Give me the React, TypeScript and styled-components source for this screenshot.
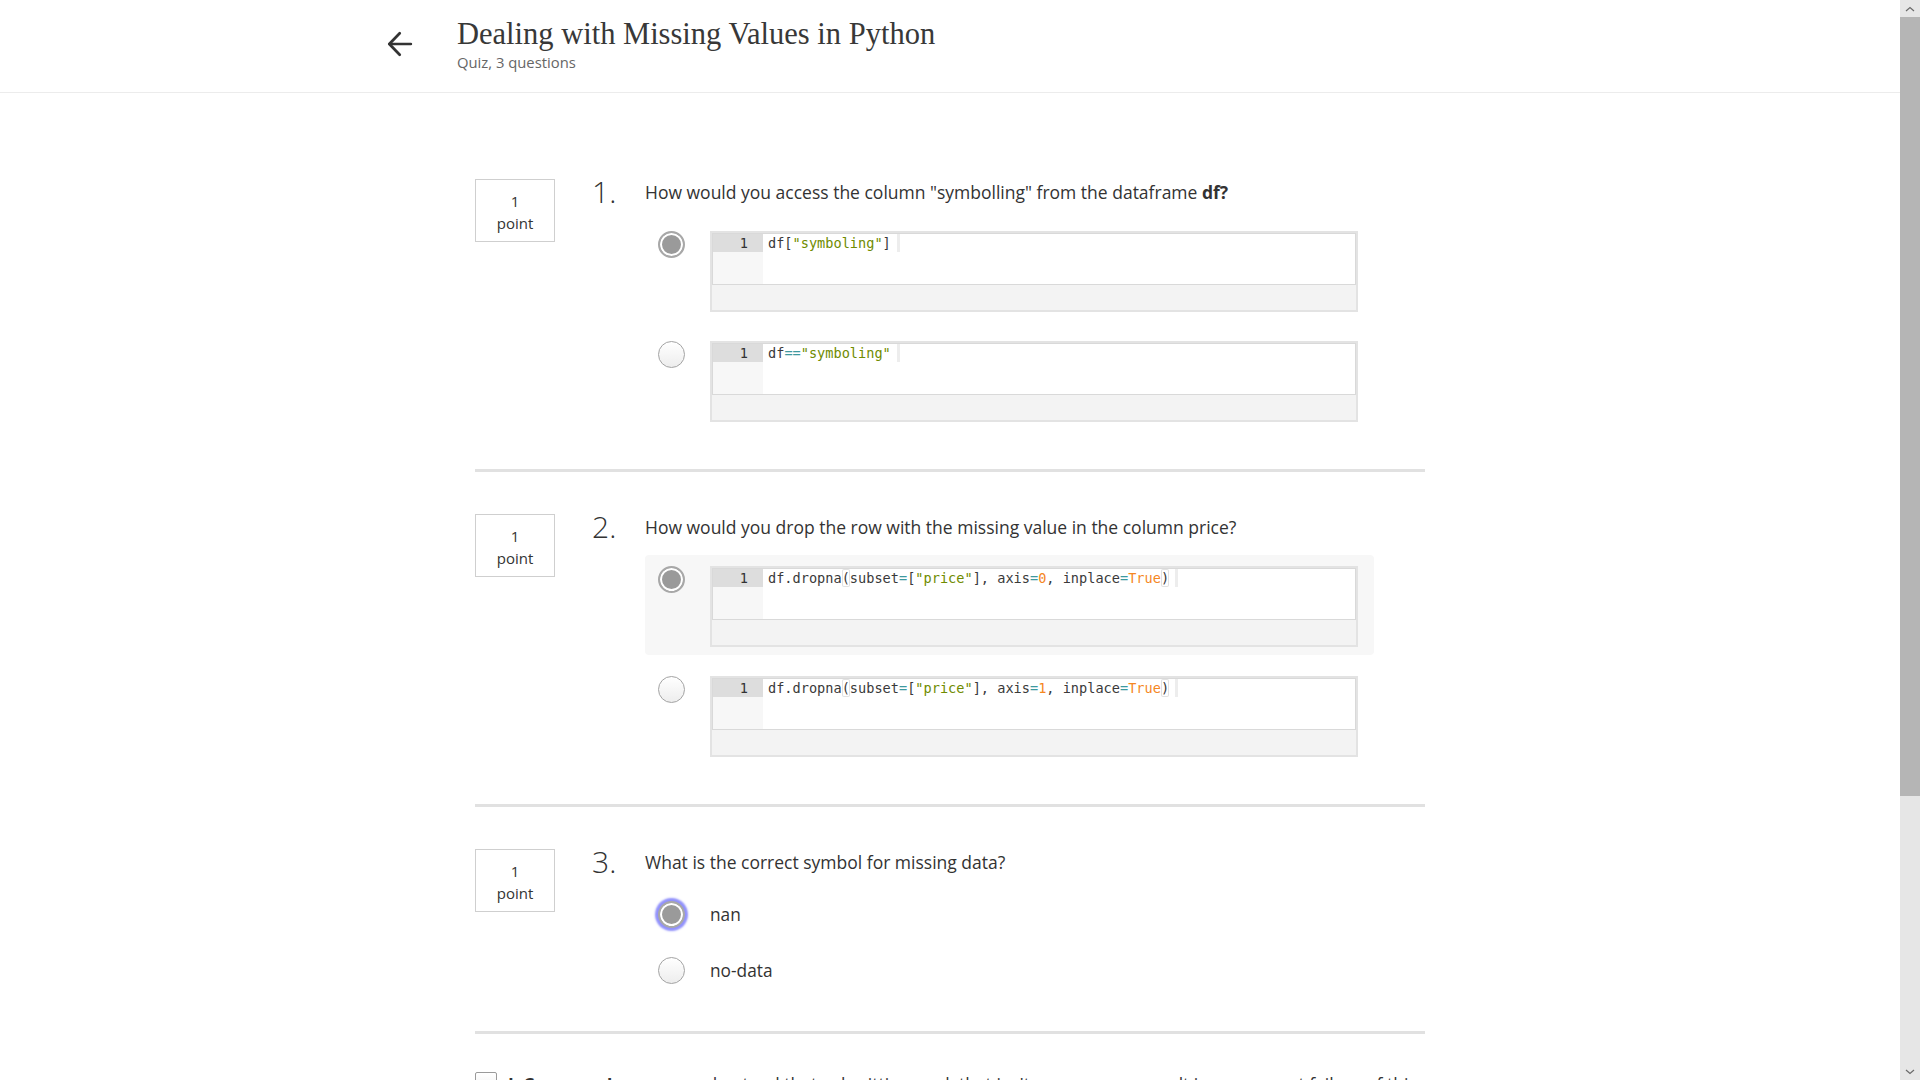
import React from "react";
import styled, { createGlobalStyle, css } from "styled-components";

const GlobalStyle = createGlobalStyle`
  html, body {
    margin: 0;
    padding: 0;
    background: #ffffff;
  }
  body {
    font-family: "Open Sans", "Liberation Sans", sans-serif;
    color: #333333;
    overflow: hidden;
  }
  * {
    box-sizing: border-box;
  }
`;

const Page = styled.div`
  display: flex;
  height: 100vh;
  overflow: hidden;
`;

const Main = styled.div`
  flex: 1;
  min-width: 0;
  overflow: hidden;
`;

const Header = styled.header`
  height: 93px;
  border-bottom: 1px solid #ececec;
`;

const HeaderInner = styled.div`
  width: 1130px;
  margin: 0 auto;
  padding-top: 16px;
  display: flex;
  align-items: center;
`;

const BackButton = styled.button`
  width: 72px;
  padding: 0 0 0 2px;
  border: none;
  background: none;
  display: flex;
  align-items: center;
  cursor: pointer;
  color: #333333;
`;

const Title = styled.h1`
  margin: 0;
  font-family: "Liberation Serif", serif;
  font-size: 30.5px;
  font-weight: 400;
  line-height: 36px;
  color: #383838;
`;

const Subtitle = styled.div`
  font-size: 14.8px;
  line-height: 20px;
  color: #666666;
`;

const Content = styled.main`
  width: 950px;
  margin: 0 auto;
  padding-top: 44px;
`;

const QuestionSection = styled.section`
  display: flex;
  padding: 37px 0 39px;
  border-bottom: 3px solid #e1e1e1;
`;

const PointBox = styled.div`
  width: 80px;
  height: 63px;
  margin-top: 5px;
  margin-right: 37px;
  padding-top: 2px;
  border: 1px solid #cfcfcf;
  display: flex;
  flex-direction: column;
  align-items: center;
  justify-content: center;
  font-size: 15px;
  line-height: 22px;
  color: #333333;
  flex-shrink: 0;
`;

const QuestionBody = styled.div`
  flex: 1;
`;

const QuestionHead = styled.div`
  display: flex;
  align-items: center;
  height: 36px;
`;

const Number = styled.div`
  width: 53px;
  font-size: 30px;
  font-weight: 300;
  line-height: 36px;
  color: #333333;
`;

const Prompt = styled.div`
  font-size: 17.5px;
  line-height: 24px;
  color: #333333;

  b {
    font-weight: 700;
  }
`;

const Options = styled.div`
  margin-top: 10px;
  margin-left: 53px;
  display: flex;
  flex-direction: column;
  align-items: flex-start;
  gap: 10px;
`;

const Option = styled.label<{ $selected?: boolean }>`
  display: flex;
  align-items: flex-start;
  padding: 11px 16px 8px 13px;
  border-radius: 4px;
  background: ${(p) => (p.$selected ? "#f7f7f7" : "transparent")};
`;

const Radio = styled.span<{ $checked?: boolean; $focused?: boolean }>`
  width: 27px;
  height: 27px;
  margin-right: 25px;
  border-radius: 50%;
  flex-shrink: 0;
  ${(p) =>
    p.$checked
      ? css`
          border: 2px solid #a8a8a8;
          background: #9a9a9a;
          box-shadow: inset 0 0 0 2px #ffffff;
        `
      : css`
          border: 1px solid #a3a3a3;
          background: linear-gradient(#ffffff, #ededed);
        `}
  ${(p) =>
    p.$focused &&
    css`
      box-shadow: inset 0 0 0 2px #ffffff, 0 0 2px 3px rgba(118, 118, 250, 0.8);
    `}
`;

const OptionText = styled.span`
  font-size: 17.3px;
  line-height: 27px;
  color: #333333;
`;

const CodeBox = styled.div`
  width: 648px;
  height: 81px;
  border: 2px solid #e3e3e3;
  background: #f3f3f3;
`;

const Editor = styled.div`
  display: flex;
  height: 52px;
  background: #ffffff;
  border: 1px solid #d9d9d9;
`;

const Gutter = styled.div`
  width: 50px;
  background: #f7f7f7;
`;

const LineNo = styled.div`
  height: 18px;
  padding-right: 15px;
  background: #dddddd;
  text-align: right;
  font-family: "DejaVu Sans Mono", "Liberation Mono", monospace;
  font-size: 13.6px;
  line-height: 18px;
  color: #333333;
`;

const CodeLine = styled.div`
  padding-left: 5px;
  height: 18px;
  display: flex;
  font-family: "DejaVu Sans Mono", "Liberation Mono", monospace;
  font-size: 13.6px;
  line-height: 18px;
  white-space: pre;
  color: #3a3a3a;
`;

const tokenColors: Record<string, string> = {
  plain: "#3a3a3a",
  str: "#6f8b00",
  num: "#f5871f",
  op: "#3e999f",
  br: "#3a3a3a",
};

const Token = styled.span<{ $kind: string }>`
  color: ${(p) => tokenColors[p.$kind]};
  ${(p) =>
    p.$kind === "br" &&
    css`
      box-shadow: inset 0 0 0 1px #e2e2e2;
      border-radius: 2px;
    `}
`;

const LineEnd = styled.span`
  width: 3px;
  height: 18px;
  margin-left: 6px;
  background: #ededed;
`;

const HonorRow = styled.div`
  margin-top: 37px;
  display: flex;
  align-items: flex-start;
  gap: 11px;
  font-size: 17.5px;
  line-height: 26px;
  color: #333333;

  b {
    font-weight: 700;
  }
`;

const Checkbox = styled.span`
  width: 22px;
  height: 22px;
  margin-top: 1px;
  border: 1px solid #9a9a9a;
  border-radius: 2px;
  background: linear-gradient(#ffffff, #eeeeee);
  flex-shrink: 0;
`;

const ScrollTrack = styled.div`
  width: 20px;
  height: 100vh;
  background: #e6e6e6;
  display: flex;
  flex-direction: column;
  flex-shrink: 0;
`;

const ScrollArrow = styled.div`
  height: 17px;
  display: flex;
  align-items: center;
  justify-content: center;
`;

const ScrollThumb = styled.div`
  height: 779px;
  background: #b5b5b5;
`;

const ScrollRest = styled.div`
  flex: 1;
`;

type Tok = [string, string];
type Opt = { code?: Tok[]; text?: string; selected?: boolean; focused?: boolean };
type Question = { prompt: React.ReactNode; options: Opt[] };

const dropna = (axis: string): Tok[] => [
  ["df.dropna", "plain"],
  ["(", "br"],
  ["subset", "plain"],
  ["=", "op"],
  ["[", "plain"],
  ['"price"', "str"],
  ["], axis", "plain"],
  ["=", "op"],
  [axis, "num"],
  [", inplace", "plain"],
  ["=", "op"],
  ["True", "num"],
  [")", "br"],
];

const questions: Question[] = [
  {
    prompt: (
      <>
        How would you access the column "symbolling" from the dataframe <b>df?</b>
      </>
    ),
    options: [
      {
        selected: true,
        code: [
          ["df[", "plain"],
          ['"symboling"', "str"],
          ["]", "plain"],
        ],
      },
      {
        code: [
          ["df", "plain"],
          ["==", "op"],
          ['"symboling"', "str"],
        ],
      },
    ],
  },
  {
    prompt: "How would you drop the row with the missing value in the column price?",
    options: [{ selected: true, code: dropna("0") }, { code: dropna("1") }],
  },
  {
    prompt: "What is the correct symbol for missing data?",
    options: [
      { text: "nan", selected: true, focused: true },
      { text: "no-data" },
    ],
  },
];

const BackArrow = () => (
  <svg width="26" height="26" viewBox="3 3 18 18" fill="none" stroke="currentColor" strokeWidth="1.9" strokeLinecap="round" strokeLinejoin="round">
    <path d="M19.5 12H4.8" />
    <path d="M11.8 4.6 4.6 12l7.2 7.4" />
  </svg>
);

const Chevron = ({ up }: { up?: boolean }) => (
  <svg width="10" height="6" viewBox="0 0 10 6" fill="none" stroke="#6a6a6a" strokeWidth="1.2">
    <path d={up ? "M1 5 5 1.5 9 5" : "M1 1 5 4.5 9 1"} />
  </svg>
);

const CodeOption = ({ code }: { code: Tok[] }) => (
  <CodeBox>
    <Editor>
      <Gutter>
        <LineNo>1</LineNo>
      </Gutter>
      <CodeLine>
        {code.map(([t, k], i) => (
          <Token key={i} $kind={k}>
            {t}
          </Token>
        ))}
        <LineEnd />
      </CodeLine>
    </Editor>
  </CodeBox>
);

export default function App() {
  return (
    <>
      <GlobalStyle />
      <Page>
        <Main>
          <Header>
            <HeaderInner>
              <BackButton aria-label="Back">
                <BackArrow />
              </BackButton>
              <div>
                <Title>Dealing with Missing Values in Python</Title>
                <Subtitle>Quiz, 3 questions</Subtitle>
              </div>
            </HeaderInner>
          </Header>
          <Content>
            {questions.map((q, qi) => (
              <QuestionSection key={qi}>
                <PointBox>
                  <span>1</span>
                  <span>point</span>
                </PointBox>
                <QuestionBody>
                  <QuestionHead>
                    <Number>{qi + 1}.</Number>
                    <Prompt>{q.prompt}</Prompt>
                  </QuestionHead>
                  <Options>
                    {q.options.map((o, oi) => (
                      <Option key={oi} $selected={o.selected && !!o.code && qi === 1}>
                        <Radio $checked={o.selected} $focused={o.focused} />
                        {o.code ? <CodeOption code={o.code} /> : <OptionText>{o.text}</OptionText>}
                      </Option>
                    ))}
                  </Options>
                </QuestionBody>
              </QuestionSection>
            ))}
            <HonorRow>
              <Checkbox />
              <span>
                <b>I, Coursera Learner,</b> understand that submitting work that isn't my own may result in permanent
                failure of this course or deactivation of my Coursera account.
              </span>
            </HonorRow>
          </Content>
        </Main>
        <ScrollTrack>
          <ScrollArrow>
            <Chevron up />
          </ScrollArrow>
          <ScrollThumb />
          <ScrollRest />
          <ScrollArrow>
            <Chevron />
          </ScrollArrow>
        </ScrollTrack>
      </Page>
    </>
  );
}
